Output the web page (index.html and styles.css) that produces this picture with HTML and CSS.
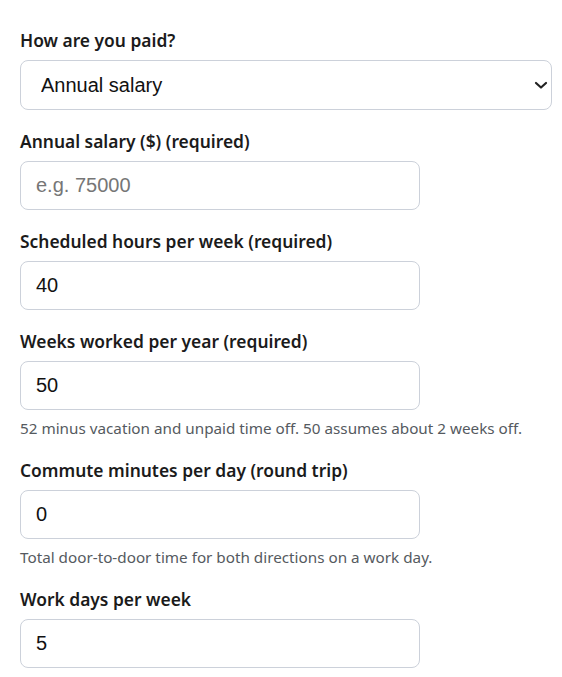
FILE: index.html
```html
<!DOCTYPE html>
<html lang="en">
<head>
    <meta charset="UTF-8">
    <meta name="viewport" content="width=device-width, initial-scale=1.0">
    <title>Pay details</title>
    <link rel="stylesheet" href="styles.css">
</head>
<body>
    <form class="pay-form">
        <div class="field">
            <label for="payType">How are you paid?</label>
            <div class="select-wrap">
                <select id="payType">
                    <option>Annual salary</option>
                    <option>Hourly wage</option>
                </select>
                <svg class="chevron" width="14" height="10" viewBox="0 0 14 10"><path d="M2 3l5 4.5L12 3" fill="none" stroke="#222" stroke-width="2.2" stroke-linecap="round" stroke-linejoin="round"/></svg>
            </div>
        </div>
        <div class="field">
            <label for="salary">Annual salary ($) (required)</label>
            <input type="text" id="salary" class="short" placeholder="e.g. 75000">
        </div>
        <div class="field">
            <label for="hours">Scheduled hours per week (required)</label>
            <input type="text" id="hours" class="short" value="40">
        </div>
        <div class="field">
            <label for="weeks">Weeks worked per year (required)</label>
            <input type="text" id="weeks" class="short" value="50">
            <p class="hint">52 minus vacation and unpaid time off. 50 assumes about 2 weeks off.</p>
        </div>
        <div class="field">
            <label for="commute">Commute minutes per day (round trip)</label>
            <input type="text" id="commute" class="short" value="0">
            <p class="hint">Total door-to-door time for both directions on a work day.</p>
        </div>
        <div class="field">
            <label for="days">Work days per week</label>
            <input type="text" id="days" class="short" value="5">
        </div>
    </form>
</body>
</html>
```

FILE: styles.css
```css
body {
    margin: 0;
    padding: 29px 10px 0 20px;
    font-family: 'Noto Sans', sans-serif;
    color: #1b1b1b;
    background: #fff;
}
.field {
    margin-bottom: 20px;
}
label {
    display: block;
    font-size: 17.4px;
    line-height: 23px;
    font-weight: 600;
    margin-bottom: 8px;
}
.select-wrap {
    position: relative;
}
select, input {
    box-sizing: border-box;
    height: 49px;
    border: 1px solid #ccd1da;
    border-radius: 8px;
    background: #fff;
    font-family: 'Liberation Sans', Arial, sans-serif;
    font-size: 20px;
    color: #111;
    outline: none;
}
select {
    width: 100%;
    height: 50px;
    padding: 0 40px 0 20px;
    appearance: none;
    -webkit-appearance: none;
}
.chevron {
    position: absolute;
    right: 4px;
    top: 20px;
    pointer-events: none;
}
input.short {
    width: 400px;
    padding: 0 15px;
}
input::placeholder {
    color: #767676;
}
.hint {
    margin: 7px 0 0;
    font-size: 15.25px;
    line-height: 22px;
    color: #555a60;
}
```
